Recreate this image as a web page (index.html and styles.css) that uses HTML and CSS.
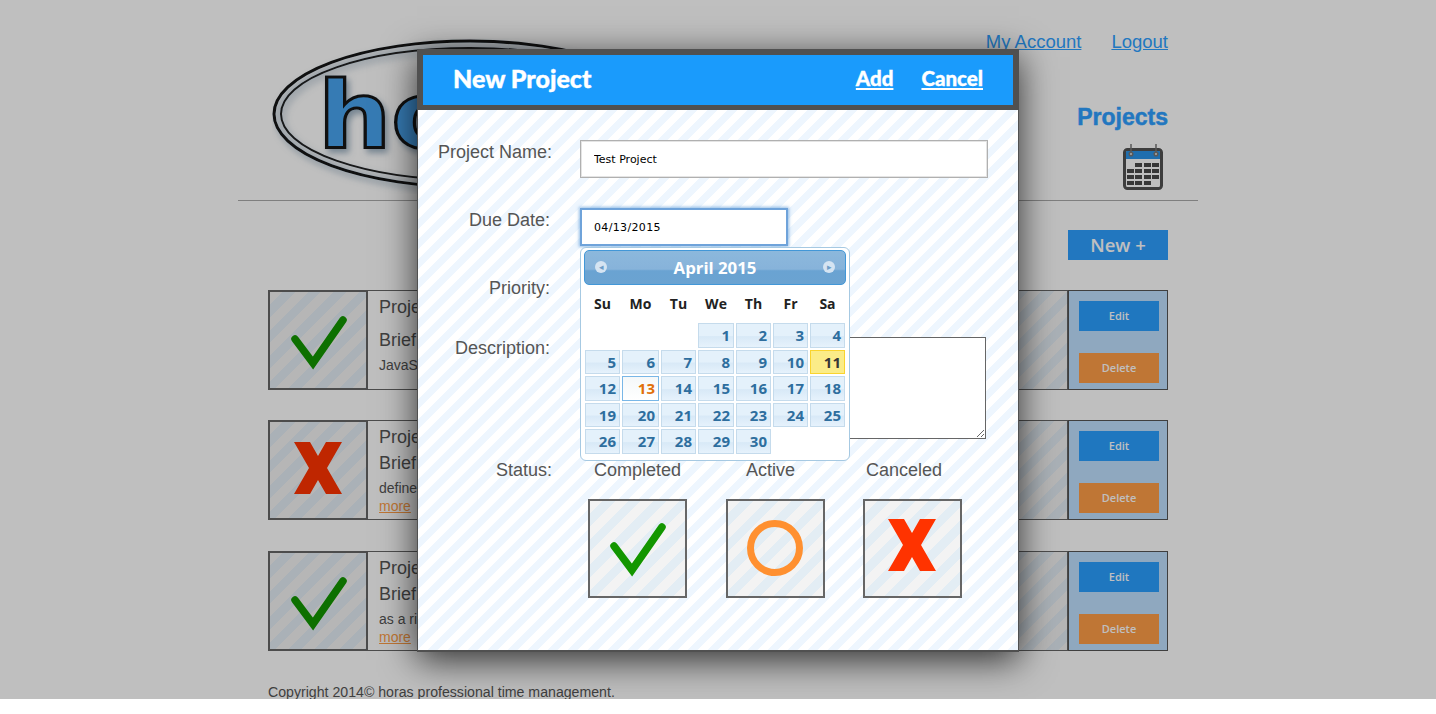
FILE: index.html
```html
<!DOCTYPE html>
<html lang="en">
<head>
  <meta charset="UTF-8">
  <title>horas - Projects</title>
  <link rel="stylesheet" href="styles.css">
</head>
<body>
<svg class="defs" width="0" height="0">
  <symbol id="icon-check" viewBox="0 0 100 100">
    <path d="M26 47 L44 71 L74 28" fill="none" stroke="#129600" stroke-width="7.5" stroke-linecap="round" stroke-miterlimit="6"/>
  </symbol>
  <symbol id="icon-circle" viewBox="0 0 100 100">
    <circle cx="49" cy="49" r="24.5" fill="none" stroke="#ff9030" stroke-width="7"/>
  </symbol>
  <symbol id="icon-x" viewBox="0 0 100 100">
    <path d="M25 20 H41 L49 34 L57 20 H73 L58 46 L73 72 H57 L49 58 L41 72 H25 L40 46 Z" fill="#ff3300"/>
  </symbol>
</svg>

<div class="page">
  <div class="wrap">
    <header class="top">
      <svg class="logo" width="400" height="156" viewBox="0 0 400 156">
        <defs>
          <filter id="soft" x="-10%" y="-10%" width="120%" height="120%">
            <feDropShadow dx="3" dy="4" stdDeviation="3" flood-color="#5d7f9a" flood-opacity="0.6"/>
          </filter>
        </defs>
        <g filter="url(#soft)">
          <ellipse cx="198" cy="76" rx="196" ry="73" fill="none" stroke="#151515" stroke-width="3"/>
          <ellipse cx="198" cy="76" rx="189" ry="66" fill="none" stroke="#222" stroke-width="2"/>
          <text class="logo-word" transform="translate(46 110) scale(1.12 1)">ho</text>
        </g>
      </svg>
      <div class="top-side">
        <nav class="top-links">
          <a href="#">My Account</a>
          <a href="#">Logout</a>
        </nav>
        <h1 class="page-title">Projects</h1>
        <svg class="cal-icon" width="40" height="46" viewBox="0 0 40 46">
          <rect x="1.5" y="5.5" width="37" height="39" rx="3" fill="#fff" stroke="#525252" stroke-width="3"/>
          <path d="M3 15 V8 Q3 7 4 7 H36 Q37 7 37 8 V15 Z" fill="#2a93e8"/>
          <g fill="none" stroke="#777" stroke-width="1.5">
            <path d="M8 0 V9"/>
            <path d="M33 0 V9"/>
            <circle cx="8" cy="10" r="1.8" fill="#ddd"/>
            <circle cx="33" cy="10" r="1.8" fill="#ddd"/>
          </g>
          <g fill="#4a4a4a">
            <rect x="12" y="19" width="7" height="4"/><rect x="21" y="19" width="7" height="4"/><rect x="29" y="19" width="7" height="4"/>
            <rect x="4" y="25" width="7" height="4"/><rect x="12" y="25" width="7" height="4"/><rect x="21" y="25" width="7" height="4"/><rect x="29" y="25" width="7" height="4"/>
            <rect x="4" y="31" width="7" height="4"/><rect x="12" y="31" width="7" height="4"/><rect x="21" y="31" width="7" height="4"/><rect x="29" y="31" width="7" height="4"/>
            <rect x="4" y="37" width="7" height="4"/><rect x="12" y="37" width="7" height="4"/><rect x="21" y="37" width="7" height="4"/>
          </g>
        </svg>
      </div>
    </header>

    <main class="content">
      <div class="toolbar"><a class="btn-new" href="#">New +</a></div>

      <section class="project plain">
        <div class="status-box"><svg class="mark"><use href="#icon-check"/></svg></div>
        <div class="project-info">
          <h2>Project</h2>
          <h3>Brief</h3>
          <p>JavaScript</p>
        </div>
        <div class="project-stripe"></div>
        <div class="project-actions">
          <a class="btn-edit" href="#">Edit</a>
          <a class="btn-delete" href="#">Delete</a>
        </div>
      </section>

      <section class="project">
        <div class="status-box"><svg class="mark"><use href="#icon-x"/></svg></div>
        <div class="project-info">
          <h2>Project</h2>
          <h3>Brief</h3>
          <p>defined</p>
          <a class="more" href="#">more</a>
        </div>
        <div class="project-stripe"></div>
        <div class="project-actions">
          <a class="btn-edit" href="#">Edit</a>
          <a class="btn-delete" href="#">Delete</a>
        </div>
      </section>

      <section class="project">
        <div class="status-box"><svg class="mark"><use href="#icon-check"/></svg></div>
        <div class="project-info">
          <h2>Project</h2>
          <h3>Brief</h3>
          <p>as a rich</p>
          <a class="more" href="#">more</a>
        </div>
        <div class="project-stripe"></div>
        <div class="project-actions">
          <a class="btn-edit" href="#">Edit</a>
          <a class="btn-delete" href="#">Delete</a>
        </div>
      </section>
    </main>

    <footer class="copy">Copyright 2014© horas professional time management.</footer>
  </div>

  <div class="overlay"></div>

  <div class="modal">
    <div class="modal-head">
      <span class="modal-title">New Project</span>
      <a href="#">Add</a>
      <a href="#">Cancel</a>
    </div>
    <form class="modal-body">
      <div class="field">
        <label class="wide">Project Name:</label>
        <input class="text-input" type="text" value="Test Project">
      </div>
      <div class="field date-field">
        <label>Due Date:</label>
        <input class="text-input date-input" type="text" value="04/13/2015">

        <!-- datepicker popup -->
        <div class="picker">
          <div class="picker-head">
            <span class="picker-nav">&#9666;</span>
            <span class="picker-month">April 2015</span>
            <span class="picker-nav">&#9656;</span>
          </div>
          <div class="picker-days">
            <b>Su</b><b>Mo</b><b>Tu</b><b>We</b><b>Th</b><b>Fr</b><b>Sa</b>
          </div>
          <div class="picker-grid">
            <i></i><i></i><i></i>
            <a>1</a><a>2</a><a>3</a><a>4</a>
            <a>5</a><a>6</a><a>7</a><a>8</a><a>9</a><a>10</a><a class="today">11</a>
            <a>12</a><a class="active">13</a><a>14</a><a>15</a><a>16</a><a>17</a><a>18</a>
            <a>19</a><a>20</a><a>21</a><a>22</a><a>23</a><a>24</a><a>25</a>
            <a>26</a><a>27</a><a>28</a><a>29</a><a>30</a>
          </div>
        </div>
      </div>
      <div class="field">
        <label>Priority:</label>
      </div>
      <div class="field desc-field">
        <label>Description:</label>
        <textarea class="desc-input"></textarea>
      </div>
      <div class="field status-field">
        <label class="wide">Status:</label>
        <div class="status-pick">
          <div class="status-names">
            <span>Completed</span><span>Active</span><span>Canceled</span>
          </div>
          <div class="status-opts">
            <div class="status-box"><svg class="mark"><use href="#icon-check"/></svg></div>
            <div class="status-box"><svg class="mark"><use href="#icon-circle"/></svg></div>
            <div class="status-box"><svg class="mark"><use href="#icon-x"/></svg></div>
          </div>
        </div>
      </div>
    </form>
  </div>
</div>
</body>
</html>
```

FILE: styles.css
```css
html, body {
  margin: 0;
  padding: 0;
  background: #fff;
  overflow: hidden;
}
body {
  font-family: "Liberation Sans", Arial, sans-serif;
  color: #555;
}
.defs {
  display: block;
  height: 0;
}
.page {
  position: relative;
  height: 699px;
  overflow: hidden;
}
.wrap {
  width: 960px;
  margin: 0 auto;
}

/* header */
.top {
  height: 201px;
  padding: 0 30px 0 34px;
  box-sizing: border-box;
  border-bottom: 1px solid #aaa;
  display: flex;
  justify-content: space-between;
}
.logo {
  margin-top: 38px;
}
.logo-word {
  font-family: "DejaVu Sans", sans-serif;
  font-weight: bold;
  font-size: 92px;
  fill: #4aa5f0;
  stroke: #151515;
  stroke-width: 3px;
}
.top-side {
  display: flex;
  flex-direction: column;
  align-items: flex-end;
}
.top-links {
  display: flex;
  gap: 30px;
  margin-top: 31px;
  font-size: 18.5px;
  line-height: 22px;
}
.top-links a {
  color: #2e9fff;
}
.page-title {
  margin: 50px 0 0;
  font-size: 23px;
  line-height: 28px;
  color: #2e9fff;
  -webkit-text-stroke: 0.5px #2e9fff;
}
.cal-icon {
  margin: 13px 5px 0 0;
}

/* list */
.content {
  padding: 0 30px;
}
.toolbar {
  display: flex;
  justify-content: flex-end;
  margin: 29px 0 30px;
}
.btn-new {
  width: 100px;
  height: 30px;
  background: #2e9fff;
  color: #fff;
  text-align: center;
  font: 600 18.5px/30px "Open Sans", sans-serif;
  text-decoration: none;
}
.project {
  display: flex;
  height: 100px;
}
.project + .project {
  margin-top: 30px;
}
.project:last-child {
  margin-top: 31px;
}
.status-box {
  flex: none;
  width: 100px;
  height: 100px;
  box-sizing: border-box;
  border: 2px solid #666;
  background: repeating-linear-gradient(135deg, #f3f3f3 0 9px, #e3edf4 9px 18px);
}
.mark {
  display: block;
  width: 100px;
  height: 100px;
  margin: -2px;
}
.project .mark {
  margin: 0 -3px -2px -1px;
}
.project-info {
  width: 330px;
  box-sizing: border-box;
  border: 1px solid #666;
  border-left: 0;
  padding: 5px 11px;
  overflow: hidden;
  white-space: nowrap;
}
.project-info h2, .project-info h3 {
  margin: 0;
  font-size: 18px;
  line-height: 22px;
  font-weight: normal;
}
.project-info h3 {
  margin-top: 4px;
}
.project-info p {
  margin: 3.5px 0 0;
  font-size: 14px;
  line-height: 20px;
}
.plain .project-info h3 {
  margin-top: 11px;
}
.more {
  display: block;
  font-size: 14px;
  line-height: 16px;
  color: #ff9e47;
}
.project-stripe {
  width: 370px;
  box-sizing: border-box;
  border: 1px solid #666;
  border-left: 0;
  background: repeating-linear-gradient(135deg, #f3f3f3 0 9px, #e3edf4 9px 18px);
}
.project-actions {
  width: 100px;
  box-sizing: border-box;
  border: 1px solid #555;
  background: #bfe0ff;
  padding: 10px 9px 0 10px;
  display: flex;
  flex-direction: column;
  gap: 22px;
}
.btn-edit, .btn-delete {
  width: 80px;
  height: 30px;
  color: #fff;
  text-align: center;
  text-decoration: none;
  font: 600 11px/30px "Open Sans", sans-serif;
}
.btn-edit {
  background: #2a9fff;
}
.btn-delete {
  background: #ff9e47;
}
.copy {
  margin: 33px 0 0 30px;
  font-size: 14.15px;
  line-height: 16px;
}

/* overlay and dialog */
.overlay {
  position: absolute;
  inset: 0;
  background: rgba(0, 0, 0, 0.25);
}
.modal {
  position: absolute;
  left: 417px;
  top: 49px;
  width: 602px;
  height: 603px;
  box-sizing: border-box;
  box-shadow: 0 8px 34px rgba(0, 0, 0, 0.75);
  display: flex;
  flex-direction: column;
}
.modal-head {
  height: 61px;
  box-sizing: border-box;
  border: 6px solid #505050;
  border-bottom-width: 5px;
  background: #1a9bfc;
  display: flex;
  align-items: center;
  gap: 28px;
  padding: 0 30px 4px 30px;
  font-family: Lato, sans-serif;
  font-weight: 900;
  font-size: 20.5px;
  color: #fff;
  -webkit-text-stroke: 0.4px #fff;
}
.modal-head a {
  color: #fff;
}
.modal-title {
  font-size: 25px;
  margin-right: auto;
}
.modal-body {
  flex: 1;
  margin: 0;
  padding-top: 30px;
  border: 1px solid #505050;
  border-top: 0;
  border-bottom-width: 2px;
  background: repeating-linear-gradient(135deg, #fff 0 7px, #eef6fe 7px 14.14px);
}
.field {
  display: flex;
  align-items: flex-start;
  margin-bottom: 30px;
  min-height: 38px;
}
.field label {
  flex: none;
  width: 132px;
  padding-right: 2px;
  margin-right: 28px;
  box-sizing: content-box;
  text-align: right;
  font-size: 18px;
  line-height: 24px;
}
.field label.wide {
  padding-right: 0;
  width: 134px;
}
.text-input {
  width: 408px;
  height: 38px;
  box-sizing: border-box;
  margin: 0;
  padding: 0 13px;
  border: 1px solid #b0b0b0;
  box-shadow: inset 0 0 0 1px #e4e4e4;
  background: #fff;
  color: #000;
  font: 11px "DejaVu Sans", sans-serif;
  outline: none;
}
.date-field {
  position: relative;
}
.date-input {
  width: 208px;
  padding: 0 12px;
  border: 2px solid #6fa3da;
  box-shadow: 0 0 3px 1px rgba(100, 160, 220, 0.7);
  letter-spacing: 0.35px;
}
.desc-field {
  margin-top: -7px;
  margin-bottom: 19px;
  min-height: 102px;
}
.desc-field label {
  margin-top: -1px;
}
.desc-input {
  width: 406px;
  height: 102px;
  box-sizing: border-box;
  margin: 0;
  border: 1px solid #666;
  background: #fff;
}
.status-field {
  margin-bottom: 0;
}
.status-names {
  display: flex;
  font-size: 18px;
  line-height: 24px;
  padding-left: 14px;
}
.status-names span:nth-child(2) {
  margin-left: 65px;
}
.status-names span:nth-child(3) {
  margin-left: 71px;
}
.status-opts {
  display: flex;
  gap: 38.5px;
  padding: 17px 0 0 8px;
}
.status-opts .status-box {
  width: 99px;
  height: 99px;
}

/* datepicker */
.picker {
  position: absolute;
  left: 162px;
  top: 39px;
  width: 270px;
  height: 214px;
  box-sizing: border-box;
  padding: 2px 3px;
  background: #fff;
  border: 1px solid #a6c9e2;
  border-radius: 6px;
  z-index: 2;
  font-family: "Open Sans", sans-serif;
}
.picker-head {
  height: 35px;
  box-sizing: border-box;
  border: 1px solid #4297d7;
  border-radius: 5px;
  background: linear-gradient(#8cb8dc, #87b3da 55%, #6aa3d2 60%, #6ba3d1);
  color: #fff;
  display: flex;
  align-items: center;
  justify-content: space-between;
  padding: 0 10px 1px;
}
.picker-month {
  font-weight: bold;
  font-size: 16.8px;
  text-align: center;
}
.picker-nav {
  width: 12px;
  height: 12px;
  border-radius: 50%;
  background: #d5e4f2;
  color: #6d9dc8;
  font-size: 9px;
  line-height: 12px;
  text-align: center;
}
.picker-days,
.picker-grid {
  display: grid;
  grid-template-columns: 35px 37px 35px 36px 35px 35px 35px;
  column-gap: 2px;
  margin-left: 1px;
}
.picker-days {
  height: 38px;
  box-sizing: border-box;
  padding-bottom: 2px;
  align-items: center;
  text-align: center;
  font-size: 14px;
  color: #222;
}
.picker-grid {
  grid-auto-rows: 24.5px;
  row-gap: 2px;
}
.picker-grid a {
  box-sizing: border-box;
  border: 1px solid #c5dbec;
  background: linear-gradient(#e4f1fb, #e4f1fb 50%, #d8e9f7 55%, #e6f2fc);
  color: #2e6e9e;
  font-weight: bold;
  font-size: 15px;
  line-height: 23px;
  text-align: right;
  padding-right: 3px;
}
.picker-grid a.today {
  border-color: #fad42e;
  background: #fbec88;
  color: #363636;
}
.picker-grid a.active {
  border-color: #79b7e7;
  background: linear-gradient(#f5f8f9, #fff);
  color: #e17009;
}
```
